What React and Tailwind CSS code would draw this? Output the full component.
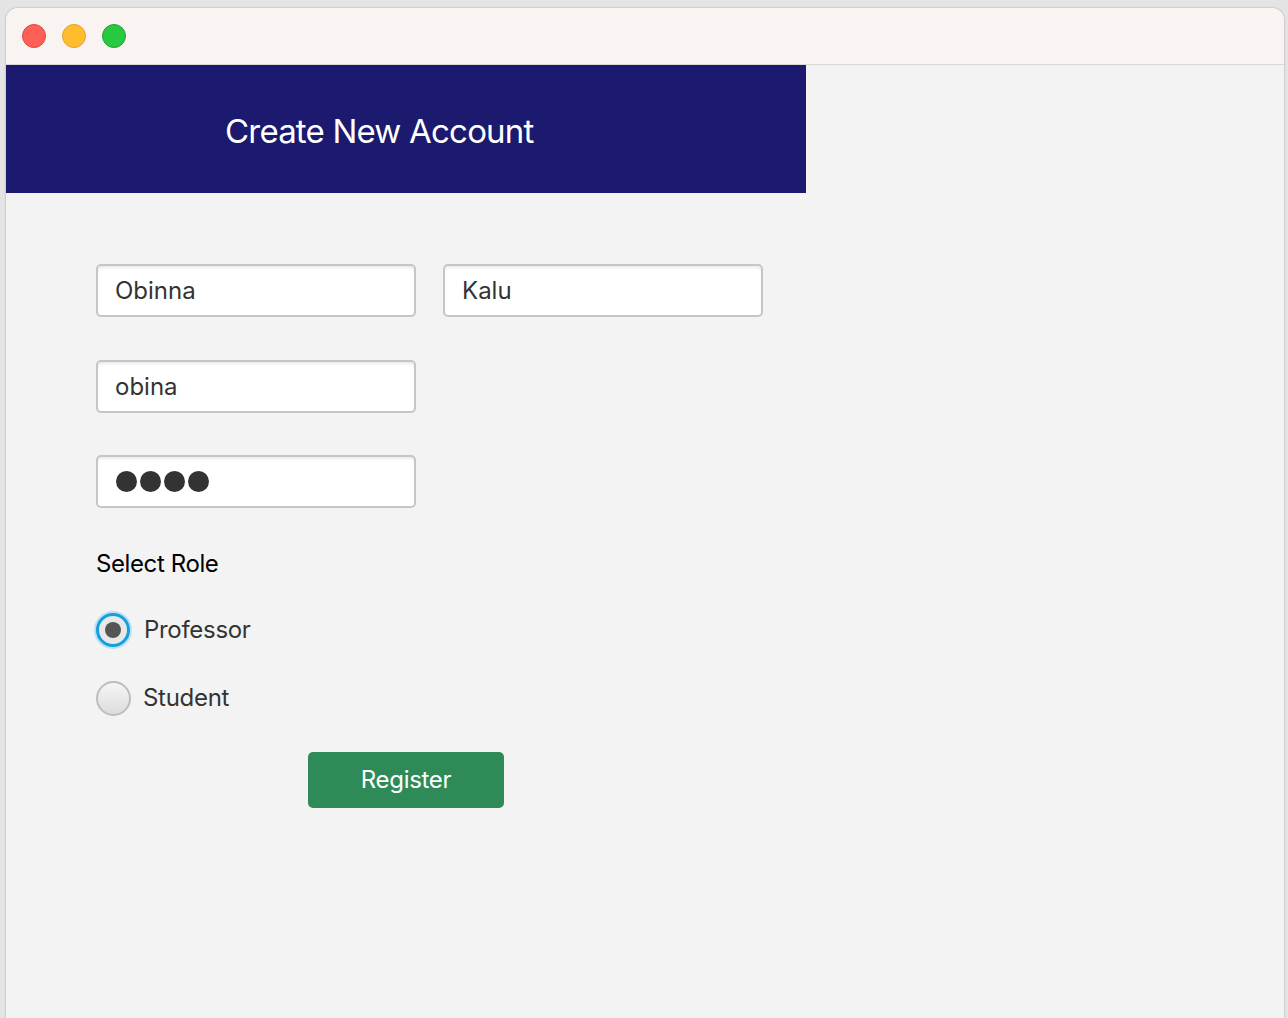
import { useState } from "react";

const font = { fontFamily: "Inter, 'Noto Sans', sans-serif" };

const boxCls =
  "h-[53px] w-[320px] rounded-[5px] border-2 border-[#c6c6c6] bg-white px-[17px] text-[24px] text-[#333] shadow-[inset_0_3px_4px_-2px_rgba(0,0,0,0.12)] outline-none";

const Field = ({ value }) => <input type="text" defaultValue={value} readOnly className={boxCls} />;

// password box drawn with big dots, as the toolkit shows it
const PasswordField = ({ length }) => (
  <div className={boxCls + " flex items-center gap-[3px] pl-[18px]"}>
    {Array.from({ length }).map((_, i) => (
      <span key={i} className="h-[21px] w-[21px] rounded-full bg-[#333]" />
    ))}
  </div>
);

const Radio = ({ label, checked, onClick }) => (
  <label onClick={onClick} className="flex h-[34px] cursor-pointer items-center gap-[12px]">
    {checked ? (
      <span className="-ml-[2px] flex h-[38px] w-[38px] items-center justify-center rounded-full bg-[#b9e0f3]">
        <span className="flex h-[34px] w-[34px] items-center justify-center rounded-full border-[3px] border-[#14a0dc] bg-[#e8e8e8]">
          <span className="h-[16px] w-[16px] rounded-full bg-[#555]" />
        </span>
      </span>
    ) : (
      <span className="h-[35px] w-[35px] rounded-full border-2 border-[#bdbdbd] bg-gradient-to-b from-[#f6f6f6] to-[#dcdcdc]" />
    )}
    <span className="text-[24px] tracking-[-0.3px] text-[#333]">{label}</span>
  </label>
);

export default function App() {
  const [role, setRole] = useState("professor");

  return (
    <div className="h-[1018px] w-[1288px] overflow-hidden bg-[#e4e4e4]" style={font}>
      <div className="ml-[6px] mt-[8px] flex h-[1010px] w-[1278px] flex-col overflow-hidden rounded-t-[12px] bg-[#f3f3f3] shadow-[0_0_2px_rgba(0,0,0,0.35)]">
        {/* title bar */}
        <div className="flex h-[57px] shrink-0 items-center gap-[16px] border-b border-[#dcd8d5] bg-[#f9f4f1] pl-[16px]">
          <span className="h-[24px] w-[24px] rounded-full border border-[#e2463f] bg-[#fe5f57]" />
          <span className="h-[24px] w-[24px] rounded-full border border-[#e1a12b] bg-[#febc2e]" />
          <span className="h-[24px] w-[24px] rounded-full border border-[#1fa533] bg-[#28c840]" />
        </div>

        {/* header */}
        <div className="flex h-[128px] w-[800px] shrink-0 items-center bg-[#1b1a6e] pt-[5px] pl-[219px]">
          <h1 className="text-[33px] font-normal tracking-[-0.8px] text-white">Create New Account</h1>
        </div>

        {/* form */}
        <div className="flex flex-col pl-[90px] pt-[71px]">
          <div className="flex gap-[27px]">
            <Field value="Obinna" />
            <Field value="Kalu" />
          </div>
          <div className="mt-[43px]">
            <Field value="obina" />
          </div>
          <div className="mt-[42px]">
            <PasswordField length={4} />
          </div>

          <p className="mt-[38px] text-[24px] tracking-[-0.4px] text-black">Select Role</p>

          <div className="mt-[31px] flex flex-col gap-[34px]">
            <Radio label="Professor" checked={role === "professor"} onClick={() => setRole("professor")} />
            <Radio label="Student" checked={role === "student"} onClick={() => setRole("student")} />
          </div>

          <button className="ml-[212px] mt-[37px] h-[56px] w-[196px] rounded-[5px] bg-[#2e8b57] text-[24px] tracking-[-0.3px] text-white">
            Register
          </button>
        </div>
      </div>
    </div>
  );
}
